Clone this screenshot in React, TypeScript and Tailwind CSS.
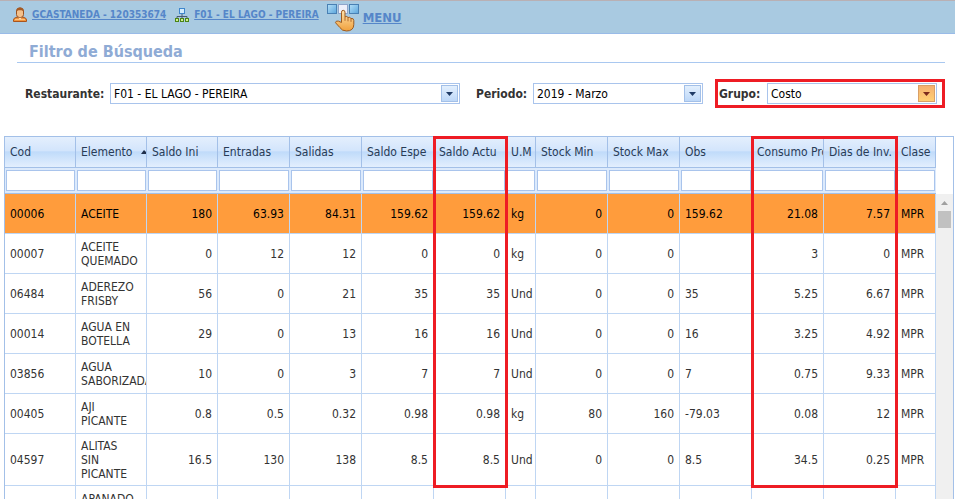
import { useState } from "react";
import clsx from "clsx";

interface Column {
  key: string;
  title: string;
  width: string;
  align?: "right";
  sorted?: boolean;
  mark?: string;
}

const COLUMNS: Column[] = [
  { key: "cod", title: "Cod", width: "w-[71px]" },
  { key: "elemento", title: "Elemento", width: "w-[71px]", sorted: true },
  { key: "ini", title: "Saldo Ini", width: "w-[71px]", align: "right" },
  { key: "entradas", title: "Entradas", width: "w-[72px]", align: "right" },
  { key: "salidas", title: "Salidas", width: "w-[72px]", align: "right" },
  { key: "espe", title: "Saldo Espe", width: "w-[72px]", align: "right" },
  { key: "actu", title: "Saldo Actu", width: "w-[72px]", align: "right", mark: "w-[75px]" },
  { key: "um", title: "U.M", width: "w-[30px]" },
  { key: "min", title: "Stock Min", width: "w-[72px]", align: "right" },
  { key: "max", title: "Stock Max", width: "w-[72px]", align: "right" },
  { key: "obs", title: "Obs", width: "w-auto" },
  { key: "consumo", title: "Consumo Promedio", width: "w-[72px]", align: "right", mark: "w-[147px]" },
  { key: "dias", title: "Dias de Inv.", width: "w-[72px]", align: "right" },
  { key: "clase", title: "Clase", width: "w-[40px]" },
];

const ROWS = [
  ["00006", "ACEITE", "180", "63.93", "84.31", "159.62", "159.62", "kg", "0", "0", "159.62", "21.08", "7.57", "MPR"],
  ["00007", "ACEITE QUEMADO", "0", "12", "12", "0", "0", "kg", "0", "0", "", "3", "0", "MPR"],
  ["06484", "ADEREZO FRISBY", "56", "0", "21", "35", "35", "Und", "0", "0", "35", "5.25", "6.67", "MPR"],
  ["00014", "AGUA EN BOTELLA", "29", "0", "13", "16", "16", "Und", "0", "0", "16", "3.25", "4.92", "MPR"],
  ["03856", "AGUA SABORIZADA", "10", "0", "3", "7", "7", "Und", "0", "0", "7", "0.75", "9.33", "MPR"],
  ["00405", "AJI PICANTE", "0.8", "0.5", "0.32", "0.98", "0.98", "kg", "80", "160", "-79.03", "0.08", "12", "MPR"],
  ["04597", "ALITAS SIN PICANTE", "16.5", "130", "138", "8.5", "8.5", "Und", "0", "0", "8.5", "34.5", "0.25", "MPR"],
  ["", "APANADO FRISBY", "", "", "", "", "", "", "", "", "", "", "", ""],
];

function UserIcon() {
  return (
    <svg width="16" height="16" viewBox="0 0 16 16" aria-hidden="true">
      <path d="M1.500 14.500v-1.500q0-2 2.500-2.500l2-.5h4l2 .5q2.500.5 2.500 2.500v1.500z" fill="#f0953f" stroke="#a9541c" />
      <path d="M3 12.500h10" stroke="#ffc27c" />
      <path d="M6 10h4l-2 2.500z" fill="#fdf0dc" />
      <rect x="4.500" y="1" width="7" height="9.500" rx="3" fill="#f4c08a" stroke="#99501f" />
      <path d="M4.500 5V4q0-3.500 3.500-3.500T11.500 4v1q-.8-1.800-2-1.800h-3Q5.300 3.200 4.500 5z" fill="#a55a25" />
    </svg>
  );
}

function SitemapIcon() {
  return (
    <svg width="16" height="16" viewBox="0 0 16 16" aria-hidden="true">
      <path d="M8 7v4M3 11V9.500h10V11" fill="none" stroke="#4b5c74" />
      <rect x="5.500" y="1.500" width="5" height="5" fill="#d4ecfd" stroke="#3f86cc" />
      <g fill="#d3ef8c" stroke="#4a8418">
        <rect x="1.500" y="11.500" width="3" height="3" />
        <rect x="6.500" y="11.500" width="3" height="3" />
        <rect x="11.500" y="11.500" width="3" height="3" />
      </g>
    </svg>
  );
}

function MenuIcon() {
  return (
    <svg width="32" height="28" viewBox="0 0 32 28" aria-hidden="true">
      <defs>
        <linearGradient id="tile" x1="0" y1="0" x2="1" y2="1">
          <stop offset="0" stopColor="#b5e0f8" />
          <stop offset="1" stopColor="#5ba5dc" />
        </linearGradient>
        <linearGradient id="hand" x1="0" y1="0" x2="0" y2="1">
          <stop offset="0" stopColor="#ffe3ae" />
          <stop offset="1" stopColor="#f0a03c" />
        </linearGradient>
      </defs>
      <rect x=".5" y=".5" width="9" height="9" fill="url(#tile)" stroke="#4980b4" />
      <rect x="11.500" y=".5" width="9" height="9" fill="#eef0fb" stroke="#8fa5cb" />
      <rect x="22.500" y=".5" width="9" height="9" fill="url(#tile)" stroke="#4980b4" />
      <path
        d="M14.500 18.500V8.200q0-1.900 1.700-1.900T18 8.200v4.600q2.200-1 3 .7 2.100-.8 2.900.9 2.900-.4 2.900 2.100v3.800q0 6.700-7.300 6.700-4.500 0-6.700-3.500l-4.300-4.800q.3-2.300 2.900-1.600z"
        fill="url(#hand)"
        stroke="#9d5b20"
      />
      <path d="M18 12.800v4M21 13.500v3.800M24 14.500v3.300" stroke="#b0682a" />
    </svg>
  );
}

interface SelectProps {
  id: string;
  options: string[];
  className: string;
  active?: boolean;
}

function SelectBox({ id, options, className, active }: SelectProps) {
  return (
    <div className={clsx("relative", className)}>
      <select
        id={id}
        className="block h-[21px] w-full appearance-none border border-[#a9c4ec] bg-white pt-px pr-5 pl-[3px] text-[12px] text-black outline-none"
      >
        {options.map((o) => (
          <option key={o}>{o}</option>
        ))}
      </select>
      <span
        className={clsx(
          "pointer-events-none absolute top-[2px] right-[2px] flex size-[17px] items-center justify-center border",
          active
            ? "border-[#d9a066] bg-linear-to-b from-[#f5b070] to-[#ffd074]"
            : "border-[#a3c0e8] bg-linear-to-b from-[#e3effd] to-[#bdd8f8]"
        )}
      >
        <svg width="7" height="4" viewBox="0 0 7 4">
          <path d="M0 0h7L3.500 4z" fill={active ? "#7c2a1c" : "#1f3b66"} />
        </svg>
      </span>
    </div>
  );
}

export default function App() {
  const [selected, setSelected] = useState("00006");

  return (
    <div className="h-screen overflow-hidden bg-white font-['DejaVu_Sans_Condensed','Noto_Sans',sans-serif] text-[12px] leading-[14px] text-[#333]">
      {/* Top bar */}
      <header className="flex h-[34px] items-start border-t border-b border-t-[#b9b0b4] border-b-[#99bbe8] bg-[#a9cae1] pl-3 font-bold text-[#5586c9]">
        <a href="#usuario" className="flex items-center gap-1 pt-[6px] text-[10px]">
          <UserIcon />
          <span className="underline">GCASTANEDA - 120353674</span>
        </a>
        <a href="#restaurante" className="ml-2 flex items-center gap-1 pt-[6px] text-[10px]">
          <SitemapIcon />
          <span className="underline">F01 - EL LAGO - PEREIRA</span>
        </a>
        <a href="#menu" className="ml-2 flex items-center gap-1 pt-[3px] text-[13px]">
          <MenuIcon />
          <span className="underline">MENU</span>
        </a>
      </header>

      {/* Filters */}
      <h1 className="mr-[10px] ml-[17px] h-[29px] border-b border-[#a9c8f0] pt-[9px] pl-3 text-[16px] leading-[18px] font-bold text-[#8fabd5]">
        Filtro de Búsqueda
      </h1>
      <form className="mt-4 flex items-center pr-[10px] pl-[25px]">
        <label htmlFor="restaurante" className="w-[85px] font-bold">Restaurante:</label>
        <SelectBox id="restaurante" options={["F01 - EL LAGO - PEREIRA"]} className="flex-1" />
        <label htmlFor="periodo" className="ml-4 w-[57px] font-bold">Periodo:</label>
        <SelectBox id="periodo" options={["2019 - Marzo"]} className="w-[170px]" />
        <div className="ml-3 flex items-center border-3 border-[#ee1c24] py-px pr-[5px] pl-px">
          <label htmlFor="grupo" className="w-12 font-bold">Grupo:</label>
          <SelectBox id="grupo" options={["Costo"]} className="w-[170px]" active />
        </div>
      </form>

      {/* Inventory grid */}
      <div className="mt-[28px] mr-px ml-1 flex border border-b-0 border-[#a3c0e8]">
        <div className="min-w-0 flex-1">
          <table className="w-full table-fixed border-separate border-spacing-0">
            <colgroup>
              {COLUMNS.map((c) => (
                <col key={c.key} className={c.width} />
              ))}
            </colgroup>
            <thead>
              <tr>
                {COLUMNS.map((c) => (
                  <th
                    key={c.key}
                    className="relative h-[31px] border-r border-b border-[#a3c0e8] bg-[linear-gradient(#e4effd,#d3e5fc_45%,#c0dbfa_50%,#e3effe)] p-0 text-left font-normal text-[#283b56]"
                  >
                    <div className="flex items-center overflow-hidden pl-[5px] whitespace-nowrap">
                      <span>{c.title}</span>
                      {c.sorted && (
                        <svg width="5" height="4" viewBox="0 0 5 4" className="ml-auto shrink-0">
                          <path d="M0 4h5V2L3 0z" fill="#1f2f4a" />
                        </svg>
                      )}
                    </div>
                    {c.mark && (
                      <span
                        className={clsx(
                          "pointer-events-none absolute -top-px -left-px z-10 h-[352px] border-3 border-[#ee1c24]",
                          c.mark
                        )}
                      />
                    )}
                  </th>
                ))}
              </tr>
              <tr>
                {COLUMNS.map((c) => (
                  <td key={c.key} className="h-[26px] border-b border-[#a3c0e8] bg-[#dceafc] p-0 px-px">
                    <input
                      aria-label={`Filtrar ${c.title}`}
                      className="block h-[21px] w-full border border-[#a9c4ec] bg-white px-1 outline-none"
                    />
                  </td>
                ))}
              </tr>
            </thead>
            <tbody>
              {ROWS.map((row, i) => (
                <tr
                  key={i}
                  onClick={() => setSelected(row[0])}
                  className={row[0] === selected ? "bg-[#ff9c3c] text-black" : "bg-white"}
                >
                  {row.map((value, j) => (
                    <td
                      key={COLUMNS[j].key}
                      className={clsx(
                        "h-10 overflow-hidden border-r border-b border-[#bfd6f3] pt-[5px] pb-1 pl-[5px] align-middle",
                        COLUMNS[j].align === "right" && "pr-[5px] text-right",
                        COLUMNS[j].key === "elemento" && "pr-2"
                      )}
                    >
                      {value}
                    </td>
                  ))}
                </tr>
              ))}
            </tbody>
          </table>
        </div>

        {/* Scrollbar */}
        <div className="w-[17px] pt-[57px]">
          <div className="flex h-full flex-col items-center bg-[#f0f0f0] pt-[7px]">
            <svg width="7" height="4" viewBox="0 0 7 4">
              <path d="M0 4h7L3.500 0z" fill="#a0a0a0" />
            </svg>
            <div className="mt-[6px] h-[17px] w-[13px] bg-[#c1c1c1]" />
          </div>
        </div>
      </div>
    </div>
  );
}
